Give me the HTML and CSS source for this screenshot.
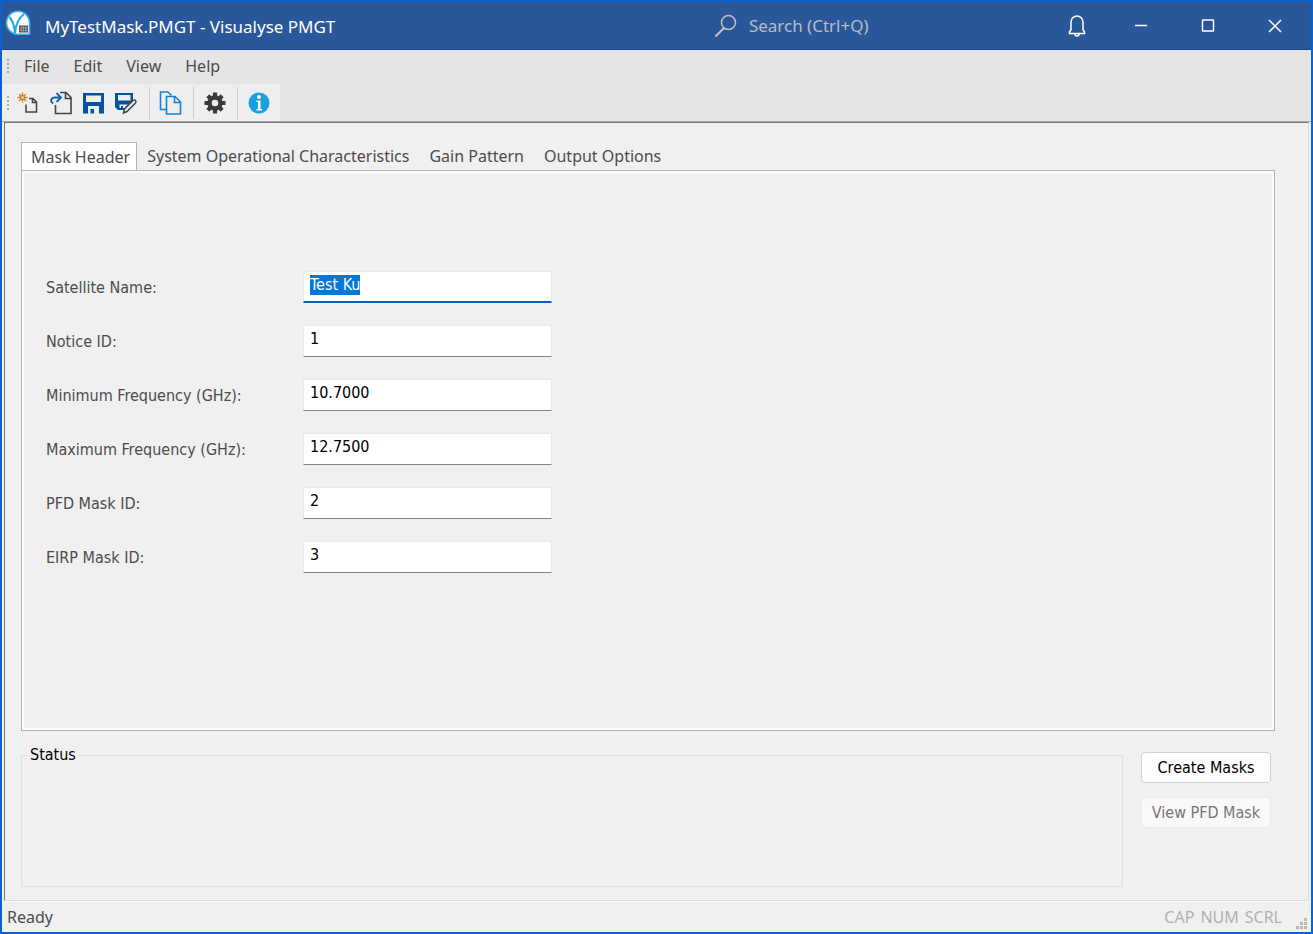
FILE: index.html
```html
<!DOCTYPE html>
<html lang="en">
<head>
<meta charset="utf-8">
<title>MyTestMask.PMGT - Visualyse PMGT</title>
<link rel="stylesheet" href="styles.css">
</head>
<body>
<div class="window">
  <header class="titlebar">
    <svg class="app-icon" width="26" height="26" viewBox="0 0 26 26">
      <path d="M13 1.200A11.500 11.500 0 1 0 13 24.200H24.500V12.700A11.500 11.500 0 0 0 13 1.200z" fill="#fff" stroke="#3aaef0" stroke-width="1.600"/>
      <path d="M4.500 7Q9 12 10 23Q11 10 19 4" fill="none" stroke="#25a5e8" stroke-width="2"/>
      <path d="M14 15.500h9v7h-9z" fill="#444"/>
      <path d="M14 18h9M14 20.300h9M16.300 16v6.500M18.600 16v6.500M20.900 16v6.500" stroke="#ccc" stroke-width=".6"/>
    </svg>
    <h1 class="title">MyTestMask.PMGT - Visualyse PMGT</h1>
    <label class="search">
      <svg width="24" height="24" viewBox="0 0 24 24" fill="none" stroke="#c2c2c4">
        <circle cx="15.500" cy="8.500" r="7" stroke-width="1.500"/><path d="M11 14L2.500 22.500" stroke-width="2.200"/>
      </svg>
      <input class="search-input" type="text" placeholder="Search (Ctrl+Q)" aria-label="Search">
    </label>
    <div class="caption-buttons">
      <button class="caption" aria-label="Notifications"><svg width="20" height="24" viewBox="0 0 20 24" fill="none" stroke="#fff" stroke-width="1.500"><path d="M2.500 19.500V18L4 15.500V8a6 6 0 0 1 12 0v7.500l1.500 2.500v1.500z"/><path d="M8 20a2 2 0 0 0 4 0"/></svg></button>
      <button class="caption" aria-label="Minimize"><svg width="14" height="14" viewBox="0 0 14 14" stroke="#fff" stroke-width="1.500"><path d="M1 6.500h12"/></svg></button>
      <button class="caption" aria-label="Maximize"><svg width="14" height="14" viewBox="0 0 14 14" fill="none" stroke="#fff" stroke-width="1.500"><rect x="1.500" y="1" width="11" height="11" rx=".6"/></svg></button>
      <button class="caption" aria-label="Close"><svg width="14" height="14" viewBox="0 0 14 14" stroke="#fff" stroke-width="1.500"><path d="M1 1l12 12M13 1L1 13"/></svg></button>
    </div>
  </header>

  <nav class="menubar">
    <span class="grip"></span>
    <button class="menu">File</button>
    <button class="menu">Edit</button>
    <button class="menu">View</button>
    <button class="menu">Help</button>
  </nav>

  <div class="toolbar">
    <span class="grip"></span>
    <button class="tool" aria-label="New"><svg width="24" height="24" viewBox="0 0 24 24" fill="none">
      <g stroke="#c8872b" stroke-width="1.300"><path d="M6.500 1.500v10M1.500 6.500h10M3 3l7 7M10 3l-7 7"/><circle cx="6.500" cy="6.500" r="2" fill="#f0d9b0"/></g>
      <path d="M13 7.500h4l3.500 3.500v10H10V13.500M16.500 7.500v4h4" stroke="#444" stroke-width="1.500"/></svg></button>
    <button class="tool" aria-label="Open"><svg width="24" height="24" viewBox="0 0 24 24" fill="none">
      <path d="M11 1.500h6l5 5v16H6.500V14M16.500 2v5.500H22" stroke="#444" stroke-width="1.600"/>
      <path d="M4 12.500C0 9 3 6.500 6 6.500h5.500M7.500 2l4.500 4.500L7.500 11" stroke="#1160ae" stroke-width="1.800"/></svg></button>
    <button class="tool" aria-label="Save"><svg width="24" height="24" viewBox="0 0 24 24">
      <path fill="#04529f" fill-rule="evenodd" d="M1 2h21v20.500H1zM4 4.500v6.500h15V4.500zM6 15v7.500h11V15z"/><path fill="#04529f" d="M8.500 18h3.500v4.500H8.500z"/></svg></button>
    <button class="tool" aria-label="Save as"><svg width="24" height="24" viewBox="0 0 24 24">
      <path fill="#04529f" fill-rule="evenodd" d="M0 2h18v9l-7 7v1H3l-3-3zM3 4v5.500h12.500V4zM4.500 13.500V17H10l3-3.500z"/><path fill="#04529f" d="M6 15h2v3H6z"/>
      <path d="M8.500 22l1-4 8.500-8.500q1.500-1 2.500 0t0 2.500L12 20.500z" fill="#eee" stroke="#444" stroke-width="1.500"/></svg></button>
    <span class="divider"></span>
    <button class="tool" aria-label="Copy"><svg width="24" height="24" viewBox="0 0 24 24" fill="none" stroke="#1584d8" stroke-width="1.600">
      <path d="M7.500 18.500H1.500V1h7.500l3.500 3.500"/><path d="M7.500 5.500H16l5.500 5.500v12h-14zM15.500 5.500v6h6"/></svg></button>
    <span class="divider"></span>
    <button class="tool" aria-label="Settings"><svg width="24" height="24" viewBox="0 0 24 24">
      <path d="M12 1.500v21M1.500 12h21M4.800 4.800l14.400 14.400M19.200 4.800L4.800 19.200" stroke="#3b3b3b" stroke-width="4.200"/><circle cx="12" cy="12" r="5.500" fill="#eee" stroke="#3b3b3b" stroke-width="4.400"/></svg></button>
    <span class="divider"></span>
    <button class="tool" aria-label="About"><svg width="24" height="24" viewBox="0 0 24 24">
      <circle cx="12" cy="12" r="10.500" fill="#1ba1e2"/><circle cx="12" cy="6" r="1.900" fill="#fff"/><path d="M9.500 9.500h4V18H15v1.500H9.500V18H11v-7H9.500z" fill="#fff"/></svg></button>
  </div>

  <main class="client">
    <div class="tabs" role="tablist">
      <button class="tab tab-active" role="tab" aria-selected="true">Mask Header</button>
      <button class="tab" role="tab">System Operational Characteristics</button>
      <button class="tab" role="tab">Gain Pattern</button>
      <button class="tab" role="tab">Output Options</button>
    </div>
    <form class="panel">
      <label for="name">Satellite Name:</label><input class="field" id="name" type="text" value="Test Ku" autofocus>
      <label for="notice">Notice ID:</label><input class="field" id="notice" type="text" value="1">
      <label for="min">Minimum Frequency (GHz):</label><input class="field" id="min" type="text" value="10.7000">
      <label for="max">Maximum Frequency (GHz):</label><input class="field" id="max" type="text" value="12.7500">
      <label for="pfd">PFD Mask ID:</label><input class="field" id="pfd" type="text" value="2">
      <label for="eirp">EIRP Mask ID:</label><input class="field" id="eirp" type="text" value="3">
    </form>
    <section class="bottom">
      <fieldset class="status"><legend>Status</legend></fieldset>
      <div class="actions">
        <button class="action">Create Masks</button>
        <button class="action" disabled>View PFD Mask</button>
      </div>
    </section>
  </main>

  <footer class="statusbar">
    <span class="ready">Ready</span>
    <span>CAP</span><span>NUM</span><span>SCRL</span>
    <svg class="resize" width="12" height="12" viewBox="0 0 12 12" fill="#b9b9b9"><path d="M9 0h3v3H9zM9 4h3v3H9zM5 4h3v3H5zM9 8h3v3H9zM5 8h3v3H5zM1 8h3v3H1z"/></svg>
  </footer>
</div>
<script src="app.js"></script>
</body>
</html>
```

FILE: styles.css
```css
* { box-sizing: border-box; }
body { margin: 0; font: 16px/22px "Noto Sans", sans-serif; color: #4c4c4c; }
button, input { font: inherit; color: inherit; margin: 0; padding: 0; border: 0; background: none; }
svg { display: block; flex: none; }

.window { display: flex; flex-direction: column; min-height: 100vh; border: 2px solid #0c62ca; background: #f0f0f0; }

.titlebar { display: grid; grid-template-columns: 26px 5fr auto 3fr; align-items: center; height: 48px; padding: 0 3px; background: #2a579a; border-bottom: 1px solid #1d4381; }
.app-icon { align-self: start; margin-top: 8px; }
.title { margin: 0; padding: 3px 0 0 14px; font-size: 17px; font-weight: 400; color: #fff; white-space: nowrap; }
.search { display: flex; align-items: center; gap: 12px; color: #b9bdc6; }
.search-input { width: 150px; outline: 0; font-size: 17px; }
.search-input::placeholder { color: #b9bdc6; opacity: 1; }
.caption-buttons { display: flex; justify-content: flex-end; }
.caption { display: grid; place-items: center; width: 67px; height: 40px; }
.caption:first-child { width: 60px; }

.menubar { display: flex; align-items: center; height: 34px; padding-bottom: 2px; background: #e5e5e5; }
.menu { padding: 0 12px; }
.grip { flex: none; width: 2px; height: 14px; margin: 0 3px 0 5px; background: repeating-linear-gradient(#aaa 0 2px, transparent 2px 4px); }
.toolbar { display: flex; align-items: center; height: 38px; background: linear-gradient(90deg, #eee 278px, #e5e5e5 278px); border-bottom: 1px solid #aaa; }
.tool { width: 24px; height: 24px; margin: 0 4px; }
.tool + .tool { margin-left: 5px; }
.divider { width: 1px; height: 32px; margin: 0 5px 0 6px; background: #ccc; }

.client { flex: 1; display: flex; flex-direction: column; margin: 0 2px; padding: 19px 33px 13px 16px; border: 1px solid #ddd; border-top-color: #777; border-left-color: #777; }
.tabs { display: flex; }
.tab { height: 28px; padding: 0 10px; }
.tab-active { background: #fff; border: 1px solid #b4b4b4; border-bottom: 0; padding: 0 6px 0 9px; }
.panel { flex: 1; display: grid; grid-template-columns: 257px 249px; grid-auto-rows: 32px; row-gap: 22px; padding: 100px 24px 24px; border: 1px solid #b4b4b4; outline: 2px solid #fafafa; outline-offset: -3px; font-family: "DejaVu Sans Condensed", sans-serif; line-height: 34px; }
.field { color: #000; background: #fff; border: 1px solid #e8e8e8; border-bottom-color: #868686; padding: 0 6px 5px; outline: 0; line-height: 20px; }
.field:focus { border-bottom: 2px solid #0a5fc0; padding-bottom: 4px; }
.field::selection { background: #0078d7; color: #fff; }

.bottom { display: flex; gap: 18px; padding-right: 4px; margin-top: 13px; font-family: "DejaVu Sans Condensed", sans-serif; }
.status { flex: 1; height: 143px; margin: 0; padding: 0; border: 1px solid #dedede; }
.status legend { margin-left: 6px; padding: 0 2px; color: #000; }
.actions { display: flex; flex-direction: column; gap: 14px; width: 130px; padding-top: 8px; }
.action { height: 31px; color: #000; background: #fdfdfd; border: 1px solid #d0d0d0; border-radius: 4px; }
.action:disabled { color: #767676; background: #f9f9f9; border-color: #e9e9e9; }

.statusbar { display: flex; align-items: center; gap: 6px; height: 31px; padding: 0 4px 0 5px; border-top: 1px solid #fafafa; color: #b0b0b0; }
.ready { margin-right: auto; color: #4c4c4c; }
.resize { align-self: flex-end; margin: 0 0 2px 7px; }
```

FILE: app.js
```js
const first = document.getElementById("name");
first.focus();
first.select();
```
